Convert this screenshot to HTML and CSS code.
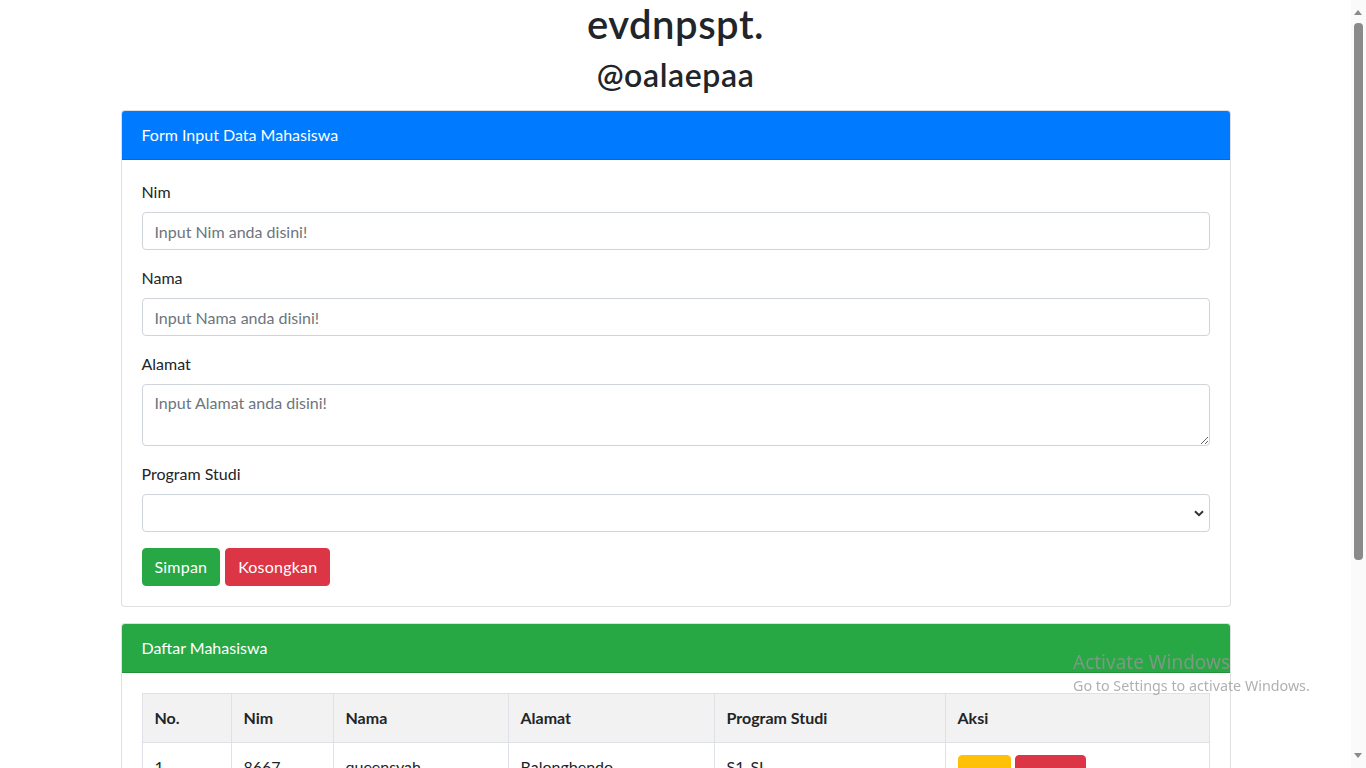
FILE: index.html
```html
<!DOCTYPE html>
<html lang="id">
<head>
<meta charset="utf-8">
<title>Data Mahasiswa</title>
<link rel="stylesheet" href="styles.css">
</head>
<body>
<div class="container">
  <h1 class="title">evdnpspt.</h1>
  <h2 class="subtitle">@oalaepaa</h2>

  <div class="card">
    <div class="card-header bg-primary">Form Input Data Mahasiswa</div>
    <div class="card-body">
      <form>
        <div class="form-group">
          <label>Nim</label>
          <input class="form-control" type="text" placeholder="Input Nim anda disini!">
        </div>
        <div class="form-group">
          <label>Nama</label>
          <input class="form-control" type="text" placeholder="Input Nama anda disini!">
        </div>
        <div class="form-group">
          <label>Alamat</label>
          <textarea class="form-control textarea" rows="2" placeholder="Input Alamat anda disini!"></textarea>
        </div>
        <div class="form-group">
          <label>Program Studi</label>
          <select class="form-control select"><option></option></select>
        </div>
        <div class="actions">
          <button type="button" class="btn btn-success">Simpan</button>
          <button type="button" class="btn btn-danger">Kosongkan</button>
        </div>
      </form>
    </div>
  </div>

  <div class="card card-list">
    <div class="card-header bg-success">Daftar Mahasiswa</div>
    <div class="card-body">
      <table class="table">
        <thead>
          <tr>
            <th class="c-no">No.</th>
            <th class="c-nim">Nim</th>
            <th class="c-nama">Nama</th>
            <th class="c-alamat">Alamat</th>
            <th class="c-prodi">Program Studi</th>
            <th class="c-aksi">Aksi</th>
          </tr>
        </thead>
        <tbody>
          <tr>
            <td>1</td>
            <td>8667</td>
            <td>queensyah</td>
            <td>Balongbendo</td>
            <td>S1-SI</td>
            <td><button type="button" class="btn btn-warning">Edit</button> <button type="button" class="btn btn-danger">Hapus</button></td>
          </tr>
        </tbody>
      </table>
    </div>
  </div>
</div>

<div class="scrollbar" aria-hidden="true">
  <span class="sb-arrow sb-up"></span>
  <span class="sb-thumb"></span>
  <span class="sb-arrow sb-down"></span>
</div>

<div class="watermark">
  <div class="wm-title">Activate Windows</div>
  <div class="wm-sub">Go to Settings to activate Windows.</div>
</div>
</body>
</html>
```

FILE: styles.css
```css
* { box-sizing: border-box; }

html { overflow: hidden; }
html, body { margin: 0; height: 100%; }

body {
  font-family: "Lato", "Noto Sans", sans-serif;
  font-size: 16px;
  line-height: 1.5;
  color: #212529;
  background: #fff;
  margin-right: 15px;
}

.container {
  max-width: 1140px;
  margin: 0 auto;
  padding: 0 15px 40px;
}

.title, .subtitle {
  text-align: center;
  font-weight: 600;
  line-height: 1.2;
  margin: 0 0 8px;
}
.title { font-size: 40px; letter-spacing: 0.5px; }
.subtitle { font-size: 32px; margin-bottom: 16px; letter-spacing: 0.6px; }

.card {
  border: 1px solid rgba(0,0,0,.125);
  border-radius: 4px;
  background: #fff;
  overflow: hidden;
}
.card-list { margin-top: 16px; }

.card-header {
  padding: 12px 20px;
  color: #fff;
  border-bottom: 1px solid rgba(0,0,0,.125);
}
.bg-primary { background: #007bff; }
.bg-success { background: #28a745; }

.card-body { padding: 20px; }

.form-group { margin-bottom: 16px; }
.form-group label { display: block; margin-bottom: 8px; }

.form-control {
  display: block;
  width: 100%;
  height: 38px;
  padding: 6px 12px;
  font: inherit;
  color: #495057;
  background: #fff;
  border: 1px solid #ced4da;
  border-radius: 4px;
}
.form-control::placeholder { color: #6c757d; opacity: 1; }
.textarea { height: 62px; resize: vertical; }
.select {
  appearance: none;
  -webkit-appearance: none;
  background-image: url("data:image/svg+xml,%3Csvg xmlns='http://www.w3.org/2000/svg' width='10' height='7' viewBox='0 0 10 7'%3E%3Cpath d='M1 1.2l4 4 4-4' fill='none' stroke='%23333' stroke-width='2'/%3E%3C/svg%3E");
  background-repeat: no-repeat;
  background-position: right 5px center;
}

.actions { display: flex; gap: 5px; }
.actions .btn { letter-spacing: 0.2px; }

.btn {
  display: inline-block;
  font: inherit;
  line-height: 1.5;
  padding: 6px 12px;
  border: 1px solid transparent;
  border-radius: 4px;
  color: #fff;
  cursor: pointer;
}
.btn-success { background: #28a745; border-color: #28a745; }
.btn-danger { background: #dc3545; border-color: #dc3545; }
.btn-warning { background: #ffc107; border-color: #ffc107; color: #212529; }

.table {
  width: 100%;
  border-collapse: collapse;
  table-layout: fixed;
}
.table th, .table td {
  border: 1px solid #dee2e6;
  padding: 12px;
  text-align: left;
  vertical-align: top;
}
.table thead th { background: #f2f2f2; font-weight: 700; }
.c-no { width: 89px; }
.c-nim { width: 102px; }
.c-nama { width: 175px; }
.c-alamat { width: 206px; }
.c-prodi { width: 231px; }

.scrollbar {
  position: fixed;
  top: 0;
  right: 0;
  width: 15px;
  height: 100%;
  background: #fafafa;
}
.sb-thumb {
  position: absolute;
  left: 3px;
  top: 23px;
  width: 9px;
  height: 537px;
  border-radius: 4px;
  background: #8a8a8a;
}
.sb-arrow {
  position: absolute;
  left: 3px;
  width: 0;
  height: 0;
  border-left: 4.5px solid transparent;
  border-right: 4.5px solid transparent;
}
.sb-up { top: 10px; border-bottom: 5px solid #8a8a8a; }
.sb-down { bottom: 10px; border-top: 5px solid #8a8a8a; }

.watermark {
  position: fixed;
  left: 1073px;
  top: 650px;
  color: rgba(150,150,150,.75);
  font-family: "Noto Sans", sans-serif;
  pointer-events: none;
  line-height: 1.3;
}
.wm-title { font-size: 19px; }
.wm-sub { font-size: 14.3px; margin-top: 2px; }
```
